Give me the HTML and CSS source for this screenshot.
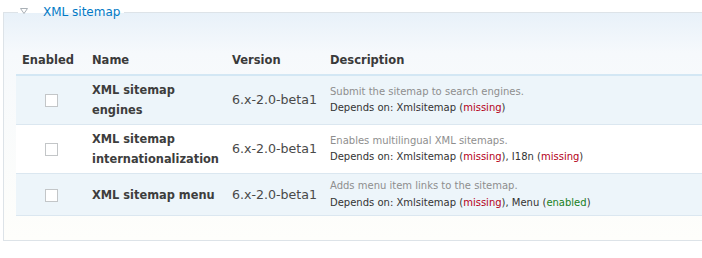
FILE: index.html
```html
<!DOCTYPE html>
<html>
<head>
<meta charset="utf-8">
<link rel="stylesheet" href="styles.css">
</head>
<body>
<fieldset class="group">
  <legend class="group-legend">
    <svg class="toggle" width="8" height="6" viewBox="0 0 8 6"><path d="M0.5 0.5 L7.5 0.5 L4 5.5 Z" fill="#fff" stroke="#a9b0b6" stroke-width="1"/></svg>
    <a class="legend-link">XML sitemap</a>
  </legend>
  <table class="modules">
    <colgroup>
      <col class="c-enabled"><col class="c-name"><col class="c-version"><col>
    </colgroup>
    <thead>
      <tr><th>Enabled</th><th>Name</th><th>Version</th><th>Description</th></tr>
    </thead>
    <tbody>
      <tr class="odd">
        <td class="cb-cell"><span class="checkbox"></span></td>
        <td class="name">XML sitemap<br>engines</td>
        <td class="version">6.x-2.0-beta1</td>
        <td class="desc"><div class="summary">Submit the sitemap to search engines.</div><div class="deps">Depends on: Xmlsitemap (<span class="missing">missing</span>)</div></td>
      </tr>
      <tr class="even">
        <td class="cb-cell"><span class="checkbox"></span></td>
        <td class="name">XML sitemap<br>internationalization</td>
        <td class="version">6.x-2.0-beta1</td>
        <td class="desc"><div class="summary">Enables multilingual XML sitemaps.</div><div class="deps">Depends on: Xmlsitemap (<span class="missing">missing</span>), I18n (<span class="missing">missing</span>)</div></td>
      </tr>
      <tr class="odd">
        <td class="cb-cell"><span class="checkbox"></span></td>
        <td class="name">XML sitemap menu</td>
        <td class="version">6.x-2.0-beta1</td>
        <td class="desc"><div class="summary">Adds menu item links to the sitemap.</div><div class="deps">Depends on: Xmlsitemap (<span class="missing">missing</span>), Menu (<span class="enabled">enabled</span>)</div></td>
      </tr>
    </tbody>
  </table>
</fieldset>
</body>
</html>
```
FILE: styles.css
```css
html, body {
  margin: 0;
  padding: 0;
  background: #fff;
  overflow: hidden;
}
body {
  font-family: "DejaVu Sans", Verdana, sans-serif;
  font-size: 12px;
  color: #494949;
  width: 702px;
  height: 258px;
}
.group {
  margin: 5px 0 0 3px;
  padding: 0 12px 24px 12px;
  width: 1000px;
  border: 1px solid #dde3e8;
  background: linear-gradient(to bottom, #e8f1f9 0px, #f6f9fc 40px, #fefefb 100%);
  box-sizing: border-box;
}
.group-legend {
  padding: 0 4px 0 2px;
  margin-left: 2px;
  line-height: 14px;
  display: flex;
  align-items: center;
}
.toggle {
  display: block;
  margin-right: 15px;
  margin-top: -3px;
}
.legend-link {
  color: #027ac6;
  font-size: 12px;
  text-decoration: none;
}
.modules {
  border-collapse: collapse;
  table-layout: fixed;
  width: 800px;
  margin-top: 33px;
}
.c-enabled { width: 70px; }
.c-name { width: 140px; }
.c-version { width: 98px; }
.modules th {
  text-align: left;
  font-weight: bold;
  font-size: 11.5px;
  color: #3a3a3a;
  padding: 0 6px 6px 6px;
  line-height: 16px;
  border-bottom: 2px solid #d3e7f4;
}
.modules td {
  padding: 4px 6px;
  vertical-align: middle;
  border-bottom: 1px solid #dbe7f0;
}
tr.odd td { background: #edf5fa; }
tr.even td { background: #fff; }
.cb-cell { text-align: center; }
.checkbox {
  display: inline-block;
  width: 11px;
  height: 11px;
  border: 1px solid #c3c6c8;
  background: #fff;
  vertical-align: middle;
}
.modules td.name {
  font-weight: bold;
  font-size: 11.4px;
  line-height: 20px;
  white-space: nowrap;
  color: #3d3d3d;
}
.modules td.version {
  font-size: 12.6px;
  line-height: 20px;
  white-space: nowrap;
}
.desc {
  font-size: 10px;
  line-height: 16.5px;
  white-space: nowrap;
}
.summary { color: #8e8e8e; }
.deps { color: #333; }
.missing { color: #b40019; }
.enabled { color: #17801c; }
```
